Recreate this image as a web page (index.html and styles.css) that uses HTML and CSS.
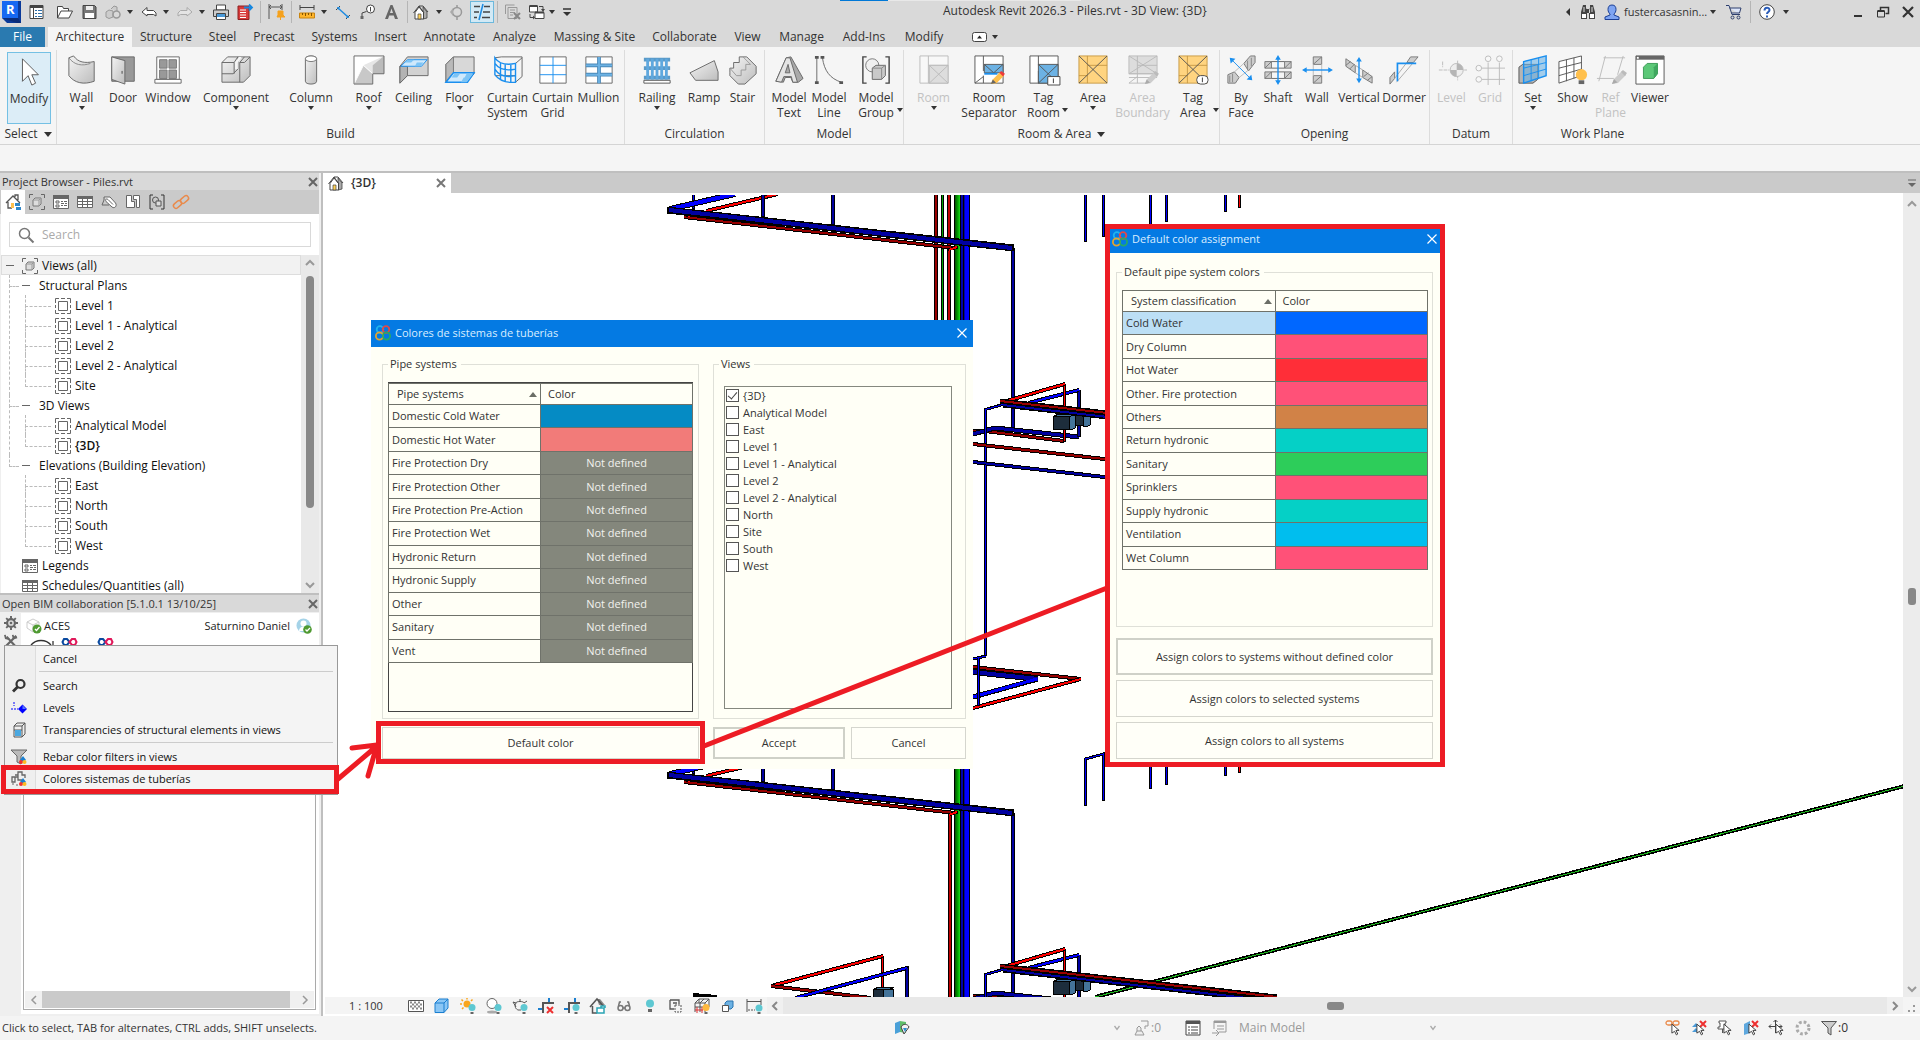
FILE: index.html
```html
<!DOCTYPE html>
<html lang="en">
<head>
<meta charset="utf-8">
<title>Autodesk Revit 2026.3 - Piles.rvt - 3D View: {3D}</title>
<link rel="stylesheet" href="styles.css">
</head>
<body>
<svg class="defs" aria-hidden="true">
  <defs>
    <linearGradient id="g-grey" x1="0" y1="0" x2="1" y2="1"><stop offset="0" stop-color="#f4f4f4"/><stop offset="1" stop-color="#bdbdbd"/></linearGradient>
    <linearGradient id="g-green" x1="0" y1="0" x2="1" y2="0"><stop offset="0" stop-color="#064d06"/><stop offset=".6" stop-color="#0a0"/><stop offset="1" stop-color="#1ed81e"/></linearGradient>
    <symbol id="i-down" viewBox="0 0 6 4"><path d="M0 0h6L3 4z" fill="#333"/></symbol>
    <symbol id="i-up" viewBox="0 0 8 5"><path d="M0 5h8L4 0z" fill="#6b6e66"/></symbol>
    <symbol id="i-x" viewBox="0 0 10 10"><path d="M1 1l8 8M9 1L1 9" fill="none" stroke="currentColor" stroke-width="2"/></symbol>
    <symbol id="i-sheet" viewBox="0 0 16 16"><path d="M3.500 3.500h9v9h-9z" fill="#fff" stroke="#666"/><path d="M.500 5V.500H4M6 .500h4M12 .500h3.500V5M15.500 7v3M15.500 12v3.500H12M10 15.500H6M4 15.500H.500V12M.500 10V7" fill="none" stroke="#666"/></symbol>
    <symbol id="i-viewcube" viewBox="0 0 16 16"><path d="M.500 4V.500H4M12 .500h3.500V4M15.500 12v3.500H12M4 15.500H.500V12" fill="none" stroke="#666"/><path d="M4 6l2-2h6v6l-2 2H4z" fill="#ddd" stroke="#777"/><path d="M4 6h6v6M10 6l2-2" fill="none" stroke="#999"/></symbol>
    <symbol id="i-legend" viewBox="0 0 16 16"><path d="M.500 1.500h15v13H.500z" fill="#fff" stroke="#666"/><path d="M0 1h16v4H0z" fill="#666"/><path d="M3 7h3v2H3zM3 11h3v2H3z" fill="none" stroke="#666"/><path d="M8 7.500h2M11 7.500h3M8 9.500h3M12 9.500h2M8 11.500h2M11 11.500h3" stroke="#666"/></symbol>
    <symbol id="i-grid" viewBox="0 0 16 16"><path d="M.500 2.500h15v11H.500z" fill="#fff" stroke="#666"/><path d="M0 2h16v3H0z" fill="#666"/><path d="M0 7.500h16M0 10.500h16M5.500 5v9M10.500 5v9" stroke="#666"/></symbol>
    <symbol id="i-house" viewBox="0 0 16 16"><path d="M10 3l4 5v6l-4 1z" fill="#aaa" stroke="#444" stroke-width=".8"/><path d="M2 8.500l4-5.500 4.500 5.500V15H2z" fill="#fff" stroke="#444"/><path d="M.500 9L6 2l5 7M6 2h4l5 6" fill="none" stroke="#444"/><path d="M5 10h3v5H5z" fill="#ffd257" stroke="#444" stroke-width=".7"/></symbol>
    <symbol id="i-rings" viewBox="0 0 16 16"><g fill="none" stroke-width="1.800"><circle cx="5" cy="4.500" r="3.300" stroke="#1fb3ec"/><circle cx="11" cy="4.500" r="3.300" stroke="#e04848"/><circle cx="4.500" cy="11" r="3.600" stroke="#e0a431"/><circle cx="11.500" cy="11" r="3.600" stroke="#27a967"/></g></symbol>
    <symbol id="i-cursor" viewBox="0 0 10 14"><path d="M1 1v10l3-2 2 4 1.500-1-2-4H9z" fill="#fff" stroke="#333"/></symbol>
    <symbol id="i-pencil" viewBox="0 0 16 16"><path d="M1 15l2-5 8-8 4 4-8 8z" fill="#ffc04d"/><path d="M1 15l2-5 3.500 3.500z" fill="#666"/><path d="M10 3l2-2 4 3-2 3z" fill="#ef3b3b"/></symbol>
    <symbol id="i-pencil-off" viewBox="0 0 16 16"><path d="M1 15l2-5 8-8 4 4-8 8z" fill="#ccc"/><path d="M1 15l2-5 3.500 3.500z" fill="#aaa"/><path d="M10 3l2-2 4 3-2 3z" fill="#bbb"/></symbol>
    <symbol id="i-infinity" viewBox="0 0 17 10"><g fill="none" stroke-width="2"><path d="M8.500 5L6 2H3L1.500 5 3 8h3z" stroke="#0a4aa0"/><path d="M8.500 5L11 2h3l1.500 3L14 8h-3z" stroke="#e0185a"/></g></symbol>
    <g id="cluster">
      <path class="o w4" d="M973 431h12l79 10"/><path class="dr w2" d="M973 431h12l79 10"/>
      <path class="o w5" d="M973 434l22-6 84 9"/><path class="db w3" d="M973 434l22-6 84 9"/>
      <path class="o w4" d="M1079 390v47"/><path class="db w2" d="M1079 390v46"/>
      <path class="o w4" d="M1028 403l51-13"/><path class="b w2" d="M1028 403l51-13"/>
      <path d="M1075.500 415.500h8v10h-8z" fill="#1d2d3c" stroke="#000"/><path d="M1083.500 415.500h7v9l-3 2h-4z" fill="#44749a" stroke="#000"/>
      <path class="o w3" d="M1064.500 384v58"/><path class="r w1" d="M1064.500 384v57"/>
      <path class="o w4" d="M1003 402l62-18"/><path class="r w2" d="M1003 402l62-18"/>
      <path d="M1053.500 416.500h16v13h-16z" fill="#1d2d3c" stroke="#000"/><path d="M1069.500 416.500l2-2h4v13l-3 2h-3z" fill="#44749a" stroke="#000"/><path d="M1053.500 416.500l4-2h18l-6 2z" fill="#44749a" stroke="#000"/>
      <path class="o w5" d="M1003 405l262 30"/><path class="db w2" d="M1003 405l262 30"/>
      <path class="o w5" d="M1000 401l277 31"/><path class="dr w2" d="M1000 401l277 31"/>
      <path class="o w3" d="M1003 404.500l-17.500 5v246"/><path class="b w1" d="M1003 404.500l-17.500 5v246"/>
    </g>
    <g id="riser">
      <path class="o w3" d="M693.500 195v14"/><path class="b w1" d="M693.500 195v13"/>
      <path class="o w6" d="M670 209l65-15"/><path class="b w4" d="M670 209l65-15"/>
      <path class="o w4" d="M706 211l72-17"/><path class="r w2" d="M706 211l72-17"/>
      <path class="o w4" d="M763 195v22M833 195v30"/><path class="db w2" d="M763 195v21M833 195v29"/>
      <path class="o w4" d="M684 217l271 31"/><path class="dr w2" d="M684 217l271 31"/>
      <path class="o w3" d="M686 216l13-3M948 250l10-3"/><path class="r w2" d="M688 216l11-3M949 250l8-3"/>
      <path class="o w7" d="M667 210l347 38"/><path class="db w4" d="M669 210l343 38"/>
    </g>
  </defs>
</svg>

<header class="titlebar">
  <div class="loading"></div>
  <div class="qat">
    <svg class="logo" viewBox="0 0 20 22"><path d="M0 0h19v22H5l-5-5z" fill="#0a3a9a"/><path d="M0 0h16v17H0z" fill="#1668f2"/><path d="M16 17l3 5h-4l-15-5z" fill="#0a2c78"/><text x="4" y="13" font-size="13" font-weight="700" fill="#fff">R</text></svg>
    <svg viewBox="0 0 16 16"><path d="M1 1.500h13v13H1z" fill="#fff" stroke="#444"/><path d="M1 1h13v3H1z" fill="#444"/><path d="M4.500 4v10" stroke="#444"/><path d="M6 6.500h2M9 6.500h4M6 9.500h2M9 9.500h4M6 12.500h2M9 12.500h4" stroke="#2b6da8"/></svg>
    <svg viewBox="0 0 16 16"><path d="M.500 14V2.500h5l1 2h5V7M.500 14L4 7h11.500L12 14z" fill="#fff" stroke="#444"/></svg>
    <svg viewBox="0 0 16 16"><path d="M1 1.500h11.500L14 3v11.500H1z" fill="#777" stroke="#444"/><path d="M4 2h7v4H4z" fill="#eee"/><path d="M3 9h9v5H3z" fill="#fff"/></svg>
    <svg viewBox="0 0 16 16"><path d="M1 8l3-2 4 1v6l-4 1.500L1 13zM6 5l3-3 3 1v4" fill="#ccc" stroke="#999"/><circle cx="11.500" cy="10.500" r="3.500" fill="none" stroke="#999" stroke-width="1.500"/></svg>
    <svg class="caret"><use href="#i-down"/></svg>
    <svg viewBox="0 0 16 16"><path d="M1 8l5-4.500V6.500h6.500L15 9v3l-2.500-1.500H6V12z" fill="#fff" stroke="#444"/></svg>
    <svg class="caret"><use href="#i-down"/></svg>
    <svg viewBox="0 0 16 16"><path d="M15 8l-5-4.500V6.500H3.500L1 9v3l2.500-1.500H10V12z" fill="#e4e4e4" stroke="#aaa"/></svg>
    <svg class="caret"><use href="#i-down"/></svg>
    <svg viewBox="0 0 16 16"><path d="M3.500 1h9v5h-9z" fill="#fff" stroke="#444"/><path d="M.500 6h15v6.500H.500z" fill="#ccc" stroke="#444"/><path d="M3.500 9.500h9v6h-9z" fill="#fff" stroke="#444"/><path d="M4 10h8v3H4z" fill="#4a9ad8"/></svg>
    <svg viewBox="0 0 16 16"><path d="M1 2h11v13.500H1z" fill="#d83a3a" stroke="#8e2020"/><path d="M3 6h6M3 8.500h6M3 11h6M3 13.500h6" stroke="#fff"/><path d="M7 3.500h8M12 .500l3 3-3 3" fill="none" stroke="#1688e0" stroke-width="1.800"/></svg>
    <span class="bar"></span>
    <svg viewBox="0 0 16 16"><path d="M1 0v15M14 0v6M1 3h13M3 1L1 3l2 2M12 1l2 2-2 2" fill="none" stroke="#555"/><path d="M10 7h5v4l2 2H9l1-2zM12.500 13v3" fill="#f5a11c" stroke="#f5a11c"/></svg>
    <span class="bar"></span>
    <svg viewBox="0 0 16 16"><path d="M1 1v5M15 1v5M1 3.500h14" stroke="#444"/><path d="M.500 9h15v5H.500z" fill="#ffb52b" stroke="#c98511"/><path d="M3.500 9v2M6.500 9v3M9.500 9v2M12.500 9v3" stroke="#855500"/></svg>
    <svg class="caret"><use href="#i-down"/></svg>
    <svg viewBox="0 0 16 16"><path d="M3 4l10 9" stroke="#1f8be0" stroke-width="1.500"/><path d="M1 6l4-4M11 15l4-4" stroke="#444"/><path d="M2 3l3 0-2 3zM14 14l-3 0 2-3z" fill="#1f8be0"/></svg>
    <svg viewBox="0 0 16 16"><circle cx="10.500" cy="5" r="4" fill="#fff" stroke="#444"/><path d="M10.500 3v4.500M6.500 7.500L2 9v4" fill="none" stroke="#444"/><path d="M.500 12h3v3h-3z" fill="#666"/></svg>
    <svg viewBox="0 0 16 16"><path d="M1 15L6.500 1h2L14 15h-3l-1.200-3.500H5.200L4 15zM6 9h3L7.500 4.500z" fill="#666"/></svg>
    <span class="bar"></span>
    <svg viewBox="0 0 16 16"><use href="#i-house"/></svg>
    <svg class="caret"><use href="#i-down"/></svg>
    <svg viewBox="0 0 16 16"><path d="M8 1v2M8 13v3" stroke="#999" stroke-width="1.500"/><circle cx="8" cy="8" r="4.500" fill="none" stroke="#999" stroke-width="1.500"/><path d="M4 4l-3 4 3 4" fill="#aaa"/></svg>
    <button class="thin" aria-label="Thin lines"><svg viewBox="0 0 16 16"><path d="M0 2.500h6M0 8h5M0 13.500h3M10 2.500h6M9 8h7M8 13.500h8" stroke="#444" stroke-width="1.500"/><path d="M9 0L5 16" stroke="#1f8be0" stroke-width="1.500"/></svg></button>
    <span class="bar"></span>
    <svg viewBox="0 0 16 16"><path d="M.500 10V1h9M3 3.500h9v11H3z" fill="none" stroke="#999"/><path d="M5 6h5M5 8.500h5M5 11h3" stroke="#999"/><path d="M9 9l6 6M15 9l-6 6" stroke="#888" stroke-width="2"/></svg>
    <svg viewBox="0 0 16 16"><path d="M.500 2h8v6h-8zM6 8.500h9v6H6z" fill="#fff" stroke="#444"/><path d="M.500 2h8M6 8.500h9" stroke="#444" stroke-width="2"/><path d="M10 2.500h4V6M1 10v3.500h4" fill="none" stroke="#444"/><path d="M12 5h4l-2 3zM4 11.500v4l2-2z" fill="#444"/></svg>
    <svg class="caret"><use href="#i-down"/></svg>
    <svg class="more" viewBox="0 0 8 8"><path d="M0 1h8" stroke="#333" stroke-width="1.500"/><path d="M0 4h8L4 8z" fill="#333"/></svg>
  </div>
  <h1 class="title">Autodesk Revit 2026.3 - Piles.rvt - 3D View: {3D}</h1>
  <div class="account">
    <svg class="w4h8" viewBox="0 0 4 8"><path d="M4 0v8L0 4z" fill="#333"/></svg>
    <svg viewBox="0 0 16 16"><path d="M3 1h3v3l1 2v9H1V8zM13 1h-3v3L9 6v9h6V8zM6 5h4v4H6z" fill="#444"/><path d="M2 10h4v4H2zM10 10h4v4h-4z" fill="#fff"/><path d="M4 3v5M12 3v5" stroke="#ddd"/></svg>
    <svg viewBox="0 0 16 16"><path d="M8 1c3 0 4 2 4 4.500 0 2-1 3.500-2 4.500v1l5 2v2.500H1V13l5-2v-1C5 9 4 7.500 4 5.500 4 3 5 1 8 1z" fill="#7ea4f2" stroke="#1c3f94"/></svg>
    <button class="user">fustercasasnin...<svg class="caret"><use href="#i-down"/></svg></button>
    <svg viewBox="0 0 16 16"><path d="M0 1.500h3l3 9h8M3.500 4H15l-1.500 5H5.500" fill="#dde6fb" stroke="#2e3f6c"/><circle cx="6.500" cy="13.500" r="1.500" fill="none" stroke="#2e3f6c"/><circle cx="12.500" cy="13.500" r="1.500" fill="none" stroke="#2e3f6c"/></svg>
    <span class="bar"></span>
    <svg viewBox="0 0 16 16"><circle cx="8" cy="8" r="7.300" fill="#fff" stroke="#444"/><path d="M5.500 6.500C5.500 3 10.500 3 10.500 6c0 2-2.500 2-2.500 4M8 11.500v2" fill="none" stroke="#2a5cb8" stroke-width="2"/></svg>
    <svg class="caret"><use href="#i-down"/></svg>
    <span class="grow"></span>
    <button class="win" aria-label="Minimize"><svg viewBox="0 0 12 12"><path d="M2 10h8" stroke="#333" stroke-width="2"/></svg></button>
    <button class="win" aria-label="Restore"><svg viewBox="0 0 12 12"><path d="M.500 5h7v6h-7z" fill="none" stroke="#333"/><path d="M.500 5h7" stroke="#333" stroke-width="2"/><path d="M3.500 4V1.500h8v6h-3" fill="none" stroke="#333" stroke-width="1.500"/></svg></button>
    <button class="win" aria-label="Close"><svg viewBox="0 0 12 12"><path d="M1 1l10 10M11 1L1 11" stroke="#333" stroke-width="2.200"/></svg></button>
  </div>
</header>

<nav class="tabs">
  <button class="file">File</button>
  <button class="active">Architecture</button>
  <button>Structure</button><button>Steel</button><button>Precast</button><button>Systems</button><button>Insert</button><button>Annotate</button><button>Analyze</button><button>Massing &amp; Site</button><button>Collaborate</button><button>View</button><button>Manage</button><button>Add-Ins</button><button>Modify</button>
  <button class="mini" aria-label="Minimize ribbon"><svg class="w15h10" viewBox="0 0 15 10"><rect x=".5" y=".5" width="14" height="9" rx="2" fill="#fff" stroke="#444"/><path d="M5 6.500h5L7.500 3.500z" fill="#222"/></svg><svg class="caret"><use href="#i-down"/></svg></button>
</nav>

<section class="ribbon">
  <div class="panel p-select">
    <div class="tools">
      <button class="tool on"><svg viewBox="0 0 32 32"><path d="M9 3v24l6-6 4 10 4-2-4-9h7z" fill="#fff" stroke="#555"/></svg><span>Modify</span></button>
    </div>
    <h2>Select <svg class="tri" viewBox="0 0 8 5"><path d="M0 0h8L4 5z" fill="#333"/></svg></h2>
  </div>
  <div class="panel p-build">
    <div class="tools">
      <button class="tool"><svg viewBox="0 0 32 32"><path d="M2 3l5-2c5 7 12 8 22 6v21c-11 4-21 2-27-6z" fill="url(#g-grey)" stroke="#666"/><path d="M2 3c6 8 14 9 23 6" fill="none" stroke="#888"/></svg><span>Wall</span><svg class="caret"><use href="#i-down"/></svg></button>
      <button class="tool"><svg viewBox="0 0 32 32"><path d="M4 2h24v26H4z" fill="#999" stroke="#666"/><path d="M4 2l14 4v25L4 26z" fill="url(#g-grey)" stroke="#666"/><path d="M15 17v3" stroke="#444"/></svg><span>Door</span></button>
      <button class="tool"><svg viewBox="0 0 32 32"><path d="M4 2h24v24H4z" fill="#fff" stroke="#666"/><path d="M7 5h8v9H7zM17 5h8v9h-8zM7 16h8v9H7zM17 16h8v9h-8z" fill="#999" stroke="#777"/><path d="M2 26h28v4H2z" fill="#fff" stroke="#666"/></svg><span>Window</span></button>
      <button class="tool"><svg viewBox="0 0 32 32"><path d="M1 8l6-6h24v20l-7 7H1z" fill="url(#g-grey)" stroke="#666"/><path d="M1 20h12l5-5V2M14 8v12M1 8h13l4-6M20 29V8l5-6M20 8h5l6-6" fill="none" stroke="#666"/><path d="M15 8l4-6h3l-4 6v7h-3z" fill="#f5f5f5"/></svg><span>Component</span><svg class="caret"><use href="#i-down"/></svg></button>
      <button class="tool"><svg viewBox="0 0 32 32"><path d="M10 4v24c0 4 12 4 12 0V4c0-4-12-4-12 0z" fill="url(#g-grey)" stroke="#666"/><ellipse cx="16" cy="4" rx="6" ry="3" fill="#fff" stroke="#777"/></svg><span>Column</span><svg class="caret"><use href="#i-down"/></svg></button>
      <button class="tool"><svg viewBox="0 0 32 32"><path d="M0 1h32v19H20v11H0z" fill="#fff"/><path d="M0 31L10 11l10 9v11z" fill="#c8c8c8"/><path d="M32 1L10 11l10 9h12z" fill="#e6e6e6"/><path d="M32 1L20 11v9h12z" fill="#bbb"/><path d="M0 31L10 11l10 9M0 1l10 10" fill="none" stroke="#fff"/><path d="M0 1h32v19H20v11H0z" fill="none" stroke="#666"/></svg><span>Roof</span><svg class="caret"><use href="#i-down"/></svg></button>
      <button class="tool"><svg viewBox="0 0 32 32"><path d="M1 12l8-10h22v20H9l-8 8z" fill="#d2d2d2" stroke="#666"/><path d="M1 12h8v10l-8 8z" fill="#b3b3b3" stroke="#666"/><path d="M2 12l7-7h21l-6 7z" fill="#cfe9fc" stroke="#1a8fef"/><path d="M9 5h7l-3 3H6zM19 8h7l-3 4h-6z" fill="#7dc4f5"/></svg><span>Ceiling</span></button>
      <button class="tool"><svg viewBox="0 0 32 32"><path d="M1 10l8-8h22v18l-8 9H1z" fill="#d8d8d8" stroke="#666"/><path d="M1 10l8-8v17l-8 9z" fill="#b9b9b9" stroke="#777"/><path d="M1 29l8-10h22l-7 10z" fill="#cfe9fc" stroke="#1a8fef" stroke-width="1.500"/><path d="M10 20h6l-3 4H7zM20 24h7l-4 5h-6zM23 20h7l-3 4h-6z" fill="#7dc4f5"/></svg><span>Floor</span><svg class="caret"><use href="#i-down"/></svg></button>
      <button class="tool"><svg viewBox="0 0 32 32"><path d="M2 3l7-1h22v21l-7 6M31 3l-7 6v20M2 22h22" fill="none" stroke="#666"/><path d="M2 3c5 7 13 8 22 6v20C14 30 7 28 2 21zM2 9c5 7 13 8 22 6M2 15c5 8 13 9 22 7M8 8v19M13 10v19M19 10v19" fill="none" stroke="#1a8fef" stroke-width="1.500"/></svg><span>Curtain<br>System</span></button>
      <button class="tool"><svg viewBox="0 0 32 32"><path d="M2 2h28v28H2z" fill="#fff" stroke="#666"/><path d="M16 2v28M2 11h28M2 21h28" stroke="#1a8fef"/></svg><span>Curtain<br>Grid</span></button>
      <button class="tool"><svg viewBox="0 0 32 32"><path d="M2 2h28v28H2z" fill="#fff" stroke="#666"/><path d="M16 2v28M2 11h28M2 21h28" stroke="#4a88b8" stroke-width="4"/><path d="M16 2v28M2 11h28M2 21h28" stroke="#6cb2e4" stroke-width="2"/></svg><span>Mullion</span></button>
    </div>
    <h2>Build</h2>
  </div>
  <div class="panel p-circ">
    <div class="tools">
      <button class="tool"><svg viewBox="0 0 32 32"><path d="M2 5h28M2 14h28M2 24h28" stroke="#5a9ac8" stroke-width="4"/><path d="M6 4v22M11 4v22M16 4v22M21 4v22M26 4v22" stroke="#5fa8de" stroke-width="3"/><path d="M2 27h28v3H2z" fill="#fff" stroke="#555"/></svg><span>Railing</span><svg class="caret"><use href="#i-down"/></svg></button>
      <button class="tool"><svg viewBox="0 0 32 32"><path d="M1 19L27 6l4 12v9H7z" fill="url(#g-grey)" stroke="#666"/></svg><span>Ramp</span></button>
      <button class="tool"><svg viewBox="0 0 32 32"><path d="M2 19v-5h4v-6h6V2h8l10 10v8L18 31h-7L2 22z" fill="url(#g-grey)" stroke="#666"/><path d="M2 14l7 8h5v-6h5v-6h5l-8-8" fill="none" stroke="#999"/></svg><span>Stair</span></button>
    </div>
    <h2>Circulation</h2>
  </div>
  <div class="panel p-model">
    <div class="tools">
      <button class="tool"><svg viewBox="0 0 32 32"><path d="M2 28L13 3l5-1 13 23-5 4h-6l-2-5h-6l-2 5z" fill="#a9a9a9" stroke="#666"/><path d="M2 28L13 3h4l8 26h-5l-1.500-6h-8L8 29zM12 19h5l-2-9z" fill="#e4e4e4" stroke="#666"/></svg><span>Model<br>Text</span></button>
      <button class="tool"><svg viewBox="0 0 32 32"><path d="M3 3v26M9 3c2 14 8 22 20 26" fill="none" stroke="#666"/><path d="M1 1h4v3H1zM1 28h4v3H1zM7 1h4v3H7zM27 28h4v3h-4z" fill="#555"/></svg><span>Model<br>Line</span></button>
      <button class="tool split"><svg viewBox="0 0 32 32"><path d="M6 2H2v28h4M26 2h4v28h-4" fill="none" stroke="#444" stroke-width="1.500"/><circle cx="12" cy="11" r="7" fill="#f0f0f0" stroke="#777"/><path d="M12 14l4-3h10v11l-4 4H12z" fill="#c9c9c9" stroke="#666"/><path d="M12 14h10v12M22 14l4-3" fill="none" stroke="#888"/></svg><span>Model<br>Group</span><svg class="caret"><use href="#i-down"/></svg></button>
    </div>
    <h2>Model</h2>
  </div>
  <div class="panel p-room">
    <div class="tools">
      <button class="tool" disabled><svg viewBox="0 0 32 32"><path d="M1 1h30v29H1zM10 1v29M10 11h21" fill="#f8f8f8" stroke="#bbb"/><path d="M11 11h20v19H11z" fill="#ddd" stroke="#bbb"/><path d="M11 11l20 19M31 11L11 30" stroke="#bbb"/></svg><span>Room</span><svg class="caret"><use href="#i-down"/></svg></button>
      <button class="tool"><svg viewBox="0 0 32 32"><path d="M1 1h30v29H1z" fill="#fff" stroke="#555"/><path d="M10 1v16M10 22v8M1 30l9-7" fill="none" stroke="#555"/><path d="M11 10h20v9H11z" fill="#6cb2e4" stroke="#555"/><path d="M11 10l10 9 10-9" fill="none" stroke="#555"/><path d="M11 20h14" stroke="#1a8fef" stroke-width="2"/><use href="#i-pencil" x="17" y="16" width="16" height="16"/></svg><span>Room<br>Separator</span></button>
      <button class="tool split"><svg viewBox="0 0 32 32"><path d="M1 1h30v29H1zM10 1v10M10 17v13" fill="#fff" stroke="#555"/><path d="M10 10h21v20H10z" fill="#6cb2e4" stroke="#555"/><path d="M10 10l21 20M31 10L10 30" stroke="#555"/><path d="M20 23h13v9H20z" fill="#fff" stroke="#444"/><path d="M26 25v5" stroke="#333"/></svg><span>Tag<br>Room</span><svg class="caret"><use href="#i-down"/></svg></button>
      <button class="tool"><svg viewBox="0 0 32 32"><path d="M1 1h30v29H1z" fill="#ffd480" stroke="#c79a45"/><path d="M10 1v29M10 11h21M1 22h9" stroke="#c79a45"/><path d="M1 1l30 29M31 1L1 30" stroke="#555"/></svg><span>Area</span><svg class="caret"><use href="#i-down"/></svg></button>
      <button class="tool" disabled><svg viewBox="0 0 32 32"><path d="M1 1h30v19H1z" fill="#ddd" stroke="#bbb"/><path d="M1 1l30 19M31 1L1 20M10 1v29M10 11h21M1 20h30M1 24h30M1 30h20M1 30l9-7" fill="none" stroke="#bbb"/><use href="#i-pencil-off" x="17" y="16" width="16" height="16"/></svg><span>Area<br>Boundary</span></button>
      <button class="tool split"><svg viewBox="0 0 32 32"><path d="M1 1h30v29H1z" fill="#ffd480" stroke="#c79a45"/><path d="M10 1v29M10 11h21M1 22h9" stroke="#c79a45"/><path d="M1 1l30 29M31 1L1 30" stroke="#555"/><rect x="20" y="22" width="12" height="9" rx="4" fill="#fff" stroke="#444"/><path d="M26 24v5" stroke="#333"/></svg><span>Tag<br>Area</span><svg class="caret"><use href="#i-down"/></svg></button>
    </div>
    <h2>Room &amp; Area <svg class="tri" viewBox="0 0 8 5"><path d="M0 0h8L4 5z" fill="#333"/></svg></h2>
  </div>
  <div class="panel p-open">
    <div class="tools">
      <button class="tool"><svg viewBox="0 0 32 32"><path d="M2 21v9h8l4-6-5-6zM19 9l7-8h5v7l-7 9z" fill="#ccc" stroke="#777"/><path d="M4 22v7M7 20v9M23 6v9M27 3v9" stroke="#888"/><path d="M9 18l10-9M14 24l10-8" stroke="#bbb"/><path d="M6 5l20 20" stroke="#1a8fef"/><path d="M4 3l6 1-5 5zM28 27l-6-1 5-5z" fill="#1a8fef"/></svg><span>By<br>Face</span></button>
      <button class="tool"><svg viewBox="0 0 32 32"><path d="M2 7h7v7H2zM23 7h7v7h-7zM2 18h7v7H2zM23 18h7v7h-7z" fill="#ccc" stroke="#777"/><path d="M2 14l7-7M23 14l7-7M2 25l7-7M23 25l7-7" stroke="#777"/><path d="M9 7h14M9 14h14M9 18h14M9 25h14" stroke="#666"/><path d="M16 3v26" stroke="#1a8fef" stroke-width="1.500"/><path d="M13 5h6l-3-5zM13 27h6l-3 5z" fill="#1a8fef"/></svg><span>Shaft</span></button>
      <button class="tool"><svg viewBox="0 0 32 32"><path d="M12 2h9v8h-9zM12 22h9v8h-9z" fill="#ccc" stroke="#777"/><path d="M12 10l9-8M12 30l9-8" stroke="#777"/><path d="M12 10v12M21 10v12" stroke="#bbb"/><path d="M4 16h25" stroke="#1a8fef" stroke-width="1.500"/><path d="M5 13v6l-5-3zM28 13v6l5-3z" fill="#1a8fef"/></svg><span>Wall</span></button>
      <button class="tool"><svg viewBox="0 0 32 32"><path d="M2 4l10 7v8L2 12zM20 16l10 7v7l-10-6z" fill="#ccc" stroke="#777"/><path d="M2 11l5-4M6 15l5-5M21 23l5-4M25 27l5-4" stroke="#777"/><path d="M12 11l8 5M12 19l8 5" stroke="#aaa"/><path d="M16 6v20" stroke="#1a8fef" stroke-width="1.500"/><path d="M13 7h6l-3-5zM13 25h6l-3 5z" fill="#1a8fef"/></svg><span>Vertical</span></button>
      <button class="tool"><svg viewBox="0 0 32 32"><path d="M23 2h8l-5 6h-7zM1 24l5-6v7l-5 6z" fill="#ccc" stroke="#777"/><path d="M19 8L6 25M26 8L8 29" stroke="#aaa"/><path d="M9 28V9h20" fill="none" stroke="#1a8fef" stroke-width="1.800"/></svg><span>Dormer</span></button>
    </div>
    <h2>Opening</h2>
  </div>
  <div class="panel p-datum">
    <div class="tools">
      <button class="tool" disabled><svg viewBox="0 0 32 32"><path d="M2 16h11M29 16h3M6 7v6M22 6v21" stroke="#bbb" stroke-dasharray="4 1"/><circle cx="21" cy="16" r="7" fill="#eee" stroke="#bbb"/><path d="M21 9a7 7 0 0 1 7 7h-7zM21 23a7 7 0 0 1-7-7h7z" fill="#b5b5b5"/></svg><span>Level</span></button>
      <button class="tool" disabled><svg viewBox="0 0 32 32"><path d="M14 8v24M26 8v24M7 14h25M7 26h25" stroke="#bbb"/><g fill="#f8f8f8" stroke="#bbb"><circle cx="14" cy="4" r="3"/><circle cx="26" cy="4" r="3"/><circle cx="4" cy="14" r="3"/><circle cx="4" cy="26" r="3"/></g></svg><span>Grid</span></button>
    </div>
    <h2>Datum</h2>
  </div>
  <div class="panel p-plane">
    <div class="tools">
      <button class="tool"><svg viewBox="0 0 32 32"><path d="M1 13l4-3h16v16l-5 4H1z" fill="#b5b5b5" stroke="#555"/><path d="M6 7l24-6v21L6 30z" fill="#6cb2e4" fill-opacity=".6" stroke="#1a8fef" stroke-width="1.500"/><path d="M14 5v23M22 3v22M6 14l24-6M6 22l24-7" stroke="#1a8fef"/></svg><span>Set</span><svg class="caret"><use href="#i-down"/></svg></button>
      <button class="tool"><svg viewBox="0 0 32 32"><path d="M1 7l24-6v21L1 30zM9 5v23M17 3v22M1 14l24-6M1 22l24-7" fill="#fff" stroke="#555"/><circle cx="25" cy="21" r="6" fill="#ffc04d"/><path d="M22 27h6v4h-6z" fill="#666"/></svg><span>Show</span></button>
      <button class="tool" disabled><svg viewBox="0 0 32 32"><path d="M8 3h23M1 25h18M10 1L3 28M29 1l-6 20" fill="none" stroke="#bbb"/><use href="#i-pencil-off" x="16" y="15" width="17" height="17"/></svg><span>Ref<br>Plane</span></button>
      <button class="tool"><svg viewBox="0 0 32 32"><path d="M1 1h30v30H1z" fill="#fff" stroke="#555"/><path d="M1 1h30v4H1z" fill="#666"/><path d="M2 2h2v2H2z" fill="#fff"/><path d="M9 13l4-4h11v11l-4 5H9z" fill="#5cc878" stroke="#3b9955"/><path d="M20 13l4-4v11l-4 5z" fill="#3fa75f"/></svg><span>Viewer</span></button>
    </div>
    <h2>Work Plane</h2>
  </div>
</section>
<div class="options"></div>

<main class="work">
  <aside class="dock">
    <section class="browser">
      <h2 class="dockhead">Project Browser - Piles.rvt <button aria-label="Close"><svg><use href="#i-x"/></svg></button></h2>
      <div class="icontabs">
        <button class="active" aria-label="All"><svg viewBox="0 0 16 16"><path d="M1 9l7-7 7 7M3 8v6h4M10 3V1h3v5" fill="none" stroke="#555" stroke-width="1.300"/><path d="M6 9h3v5H6z" fill="#ffc04d"/><path d="M10 9h5v3h-5zM11 13h5v3h-5z" fill="#2f86c8"/></svg></button>
        <button aria-label="Views"><svg><use href="#i-viewcube"/></svg></button>
        <button aria-label="Legends"><svg><use href="#i-legend"/></svg></button>
        <button aria-label="Schedules"><svg><use href="#i-grid"/></svg></button>
        <button aria-label="Sheets"><svg viewBox="0 0 16 16"><path d="M3 3h6l5.500 6c2 3-1 6-3.500 4L5 7.500C4 6 5 4 7 5.500l5 5" fill="#fff" stroke="#666"/><path d="M3 3v3l-2 5h7" fill="none" stroke="#666"/></svg></button>
        <button aria-label="Families"><svg viewBox="0 0 16 16"><path d="M1.500 1.500h5v6h3v6h-8zM8.500 1.500h6v12h-3v-8h-3z" fill="#fff" stroke="#666"/></svg></button>
        <button aria-label="Groups"><svg viewBox="0 0 16 16"><path d="M4 1H1v14h3M12 1h3v14h-3" fill="none" stroke="#333"/><circle cx="6.500" cy="6" r="3" fill="none" stroke="#555"/><path d="M7 7h5v5H7z" fill="#ddd" stroke="#555"/></svg></button>
        <button aria-label="Links"><svg viewBox="0 0 16 16"><g fill="none" stroke="#e98a4b" stroke-width="1.500"><rect x="0" y="8" width="9" height="5" rx="2.500" transform="rotate(-40 4.500 10.500)"/><rect x="7" y="3" width="9" height="5" rx="2.500" transform="rotate(-40 11.500 5.500)"/></g></svg></button>
      </div>
      <div class="searchwrap"><label class="search"><svg viewBox="0 0 16 16"><circle cx="6.500" cy="6.500" r="5" fill="none" stroke="#777" stroke-width="1.500"/><path d="M10.500 10.500l5 5" stroke="#777" stroke-width="2"/></svg><input type="text" placeholder="Search" aria-label="Search"></label></div>
      <div class="treebox">
        <ul class="tree">
          <li class="root sel"><i class="minus"></i><svg><use href="#i-viewcube"/></svg>Views (all)</li>
          <li class="group"><div class="row"><i class="minus"></i>Structural Plans</div>
            <ul><li><svg><use href="#i-sheet"/></svg>Level 1</li><li><svg><use href="#i-sheet"/></svg>Level 1 - Analytical</li><li><svg><use href="#i-sheet"/></svg>Level 2</li><li><svg><use href="#i-sheet"/></svg>Level 2 - Analytical</li><li><svg><use href="#i-sheet"/></svg>Site</li></ul></li>
          <li class="group"><div class="row"><i class="minus"></i>3D Views</div>
            <ul><li><svg><use href="#i-sheet"/></svg>Analytical Model</li><li><svg><use href="#i-sheet"/></svg><b>{3D}</b></li></ul></li>
          <li class="group end"><div class="row"><i class="minus"></i>Elevations (Building Elevation)</div>
            <ul><li><svg><use href="#i-sheet"/></svg>East</li><li><svg><use href="#i-sheet"/></svg>North</li><li><svg><use href="#i-sheet"/></svg>South</li><li><svg><use href="#i-sheet"/></svg>West</li></ul></li>
          <li class="root flat"><svg><use href="#i-legend"/></svg>Legends</li>
          <li class="root flat"><svg><use href="#i-grid"/></svg>Schedules/Quantities (all)</li>
        </ul>
        <div class="vscroll"><svg viewBox="0 0 10 6"><path d="M1 5l4-4 4 4" fill="none" stroke="#999" stroke-width="2"/></svg><span class="thumb"></span><svg viewBox="0 0 10 6"><path d="M1 1l4 4 4-4" fill="none" stroke="#999" stroke-width="2"/></svg></div>
      </div>
    </section>
    <section class="bim">
      <h2 class="dockhead">Open BIM collaboration [5.1.0.1 13/10/25] <button aria-label="Close"><svg><use href="#i-x"/></svg></button></h2>
      <div class="bimbody">
        <div class="rail">
          <svg viewBox="0 0 16 16"><circle cx="8" cy="8" r="4.500" fill="#ddd" stroke="#666" stroke-width="2.500"/><circle cx="8" cy="8" r="1.500" fill="#666"/><path d="M8 0v3M8 13v3M0 8h3M13 8h3M2.500 2.500l2 2M11.500 11.500l2 2M13.500 2.500l-2 2M2.500 13.500l2-2" stroke="#666" stroke-width="2.200"/></svg>
          <svg viewBox="0 0 16 16"><path d="M2 14L14 2M3 3l10 11" stroke="#666" stroke-width="2.500"/><path d="M1 1l1 4 4 1M15 4l-4 1-1-4" fill="none" stroke="#666" stroke-width="2"/></svg>
        </div>
        <div class="bimmain">
          <div class="who"><svg viewBox="0 0 16 16"><path d="M1 4l6-3 6 3v6l-6 4-6-4zM1 4l6 3 6-3M7 7v7" fill="#fff" stroke="#ccc"/><circle cx="11" cy="11" r="4.500" fill="#4f9a32"/><path d="M9 11l1.500 1.500L13.500 9" fill="none" stroke="#fff" stroke-width="1.300"/></svg>ACES<span class="grow"></span>Saturnino Daniel<svg class="avatar" viewBox="0 0 16 16"><circle cx="7.500" cy="7.500" r="7" fill="#a5d3e8"/><circle cx="7.500" cy="5.500" r="3" fill="#fff"/><path d="M3 13c0-6 9-6 9 0z" fill="#fff"/><circle cx="11.500" cy="11.500" r="4.300" fill="#4f9a32"/><path d="M9.500 11.500l1.500 1.500 3-3" fill="none" stroke="#fff" stroke-width="1.300"/></svg></div>
          <div class="bimicons"><svg class="w24" viewBox="0 0 24 10"><path d="M1 8C6 2 16 2 21 8M23 4v5h-5" fill="none" stroke="#333" stroke-width="1.300"/></svg><svg><use href="#i-infinity"/></svg><svg><use href="#i-infinity"/></svg></div>
          <div class="bimlist">
            <div class="hscroll"><svg viewBox="0 0 6 10"><path d="M5 1L1 5l4 4" fill="none" stroke="#999" stroke-width="1.500"/></svg><span class="thumb"></span><svg viewBox="0 0 6 10"><path d="M1 1l4 4-4 4" fill="none" stroke="#999" stroke-width="1.500"/></svg></div>
          </div>
        </div>
      </div>
    </section>
  </aside>

  <section class="view">
    <div class="viewtabs">
      <div class="viewtab"><svg><use href="#i-house"/></svg><b>{3D}</b><span class="grow"></span><button aria-label="Close view"><svg><use href="#i-x"/></svg></button></div>
      <span class="grow"></span>
      <svg class="tabmenu" viewBox="0 0 8 8"><path d="M0 1h8" stroke="#666"/><path d="M0 4h8L4 8z" fill="#666"/></svg>
    </div>
    <div class="viewbody">
      <div class="canvas">
        <svg class="scene" aria-label="3D piping model">
          <g transform="translate(-325 -195)">
            <path class="o w4" d="M936 195v130"/><path class="dr w2" d="M936 195v130"/>
            <path class="o w3" d="M942.500 195v130"/><path class="gr w1" d="M942.500 195v130"/>
            <path class="o w4" d="M949 195v130"/><path class="r2 w2" d="M949 195v130"/>
            <path class="o w4" d="M950 815v182"/><path class="r2 w2" d="M950 815v182"/>
            <path d="M954 195h7v802h-7z" fill="#000"/><path d="M955 195h5v802h-5z" fill="url(#g-green)"/>
            <path d="M960 195h10v802h-10z" fill="#000"/><path d="M961 195h2v802h-2z" fill="#0000a8"/><path d="M965 195h4v802h-4z" fill="#00f"/><path d="M964 195h1v802h-1z" fill="#0000a0"/>
            <path class="o w4" d="M1013 248v182"/><path class="db w2" d="M1013 248v181"/>
            <path class="o w4" d="M1013 813v190"/><path class="db w2" d="M1013 813v190"/>
            <use href="#riser"/><use href="#riser" y="565"/>
            <path class="o w3" d="M1085.500 195v47M1103.500 195v42M1150.500 195v40M1166.500 195v27M1225.500 195v17M1239.500 195v13"/>
            <path class="b w1" d="M1085.500 195v46M1103.500 195v41M1150.500 195v40M1166.500 195v26M1225.500 195v16"/><path class="r w1" d="M1239.500 195v12"/>
            <path class="o w3" d="M1085.500 806v-47l18-5v47M1150.500 760v29M1166.500 760v25M1225.500 760v16M1239.500 760v13"/>
            <path class="b w1" d="M1085.500 805v-46l18-5v46M1150.500 760v28M1166.500 760v24M1225.500 760v15"/><path class="r w1" d="M1239.500 760v12"/>
            <path class="o w4" d="M1095 997l825-215"/><path class="g3 w1" d="M1095 997l825-215"/>
            <use href="#cluster"/><use href="#cluster" y="565"/>
            <path class="o w4" d="M973 444l140 16"/><path class="dr w2" d="M973 444l140 16"/>
            <path class="o w4" d="M973 462l140 16"/><path class="db w2" d="M973 462l140 16"/>
            <path class="o w4" d="M973 667l108 12"/><path class="dr w2" d="M973 667l108 12"/>
            <path class="o w4" d="M973 708l108-29"/><path class="r w2" d="M973 708l108-29"/>
            <path class="o w6" d="M973 672l65 7"/><path class="o w5" d="M1038 679l-65 18"/><path class="db w4" d="M973 672l65 7"/><path class="b w3" d="M1037 679l-64 18"/>
            <path class="o w3" d="M973 659l13-3M978.500 658v48"/><path class="b w1" d="M973 659l13-3M978.500 658v47"/>
            <path class="o w3" d="M882.500 956v34"/><path class="r w1" d="M882.500 956v34"/>
            <path class="o w4" d="M771 986l112-30"/><path class="r w2" d="M771 986l112-30"/>
            <path class="o w4" d="M771 986l100 12"/><path class="dr w2" d="M771 986l100 12"/>
            <path class="o w4" d="M795 998l112-30v32"/><path class="b w2" d="M795 998l112-30"/><path class="db w2" d="M907 968v32"/>
            <path d="M873.500 989.500h10v10h-10z" fill="#1d2d3c" stroke="#000"/><path d="M883.500 989.500h10v10h-10zM873.500 989.500l4-2h16l-4 2z" fill="#44749a" stroke="#000"/>
            <path class="o w4" d="M693 995l24 2"/>
          </g>
        </svg>
      </div>
      <div class="cscroll"><svg viewBox="0 0 10 6"><path d="M1 5l4-4 4 4" fill="none" stroke="#999" stroke-width="2"/></svg><span class="thumb"></span><svg viewBox="0 0 10 6"><path d="M1 1l4 4 4-4" fill="none" stroke="#999" stroke-width="2"/></svg></div>
    </div>
    <div class="viewbar">
      <div class="viewctl">
        <span class="scale">1 : 100</span>
        <svg viewBox="0 0 16 16"><path d="M.500 2.500h15v11H.500z" fill="#fff" stroke="#555"/><path d="M2 4.500h12M2 8.500h12" stroke="#888" stroke-width="2" stroke-dasharray="2 2"/><path d="M4 6.500h11M4 10.500h11" stroke="#888" stroke-width="2" stroke-dasharray="2 2"/></svg>
        <svg viewBox="0 0 16 16"><path d="M1 5l4-4h9v9l-4 4.500H1z" fill="#8ac6f5" stroke="#1a7fd0"/><path d="M1 5h9v9.500M10 5l4-4" fill="none" stroke="#1a7fd0"/></svg>
        <svg viewBox="0 0 16 16"><circle cx="7" cy="6" r="3.500" fill="#f9a61c"/><path d="M7 0v1.500M0 6h2M1.500 1.500l1.500 1.500M12.500 1.500L11 3M2 11l1.500-1.500" stroke="#f9a61c" stroke-width="1.500"/><circle cx="12" cy="9.500" r="3.500" fill="#5ec8d2"/><path d="M10.500 14h3v2h-3z" fill="#666"/></svg>
        <svg viewBox="0 0 16 16"><circle cx="6" cy="5.500" r="5" fill="#fff" stroke="#666"/><ellipse cx="6" cy="14" rx="5" ry="1.500" fill="#aaa"/><circle cx="12" cy="9.500" r="3.500" fill="#5ec8d2"/><path d="M10.500 14h3v2h-3z" fill="#666"/></svg>
        <svg viewBox="0 0 16 16"><path d="M1 4l3 1c0-2 8-2 8 0l3-2M4 5c-2 4 0 6 2 7h3M8 1v2M1 4l3 5" fill="none" stroke="#555"/><circle cx="12" cy="9.500" r="3.500" fill="#5ec8d2"/><path d="M10.500 14h3v2h-3z" fill="#666"/></svg>
        <svg viewBox="0 0 16 16"><path d="M5 15V5h11" fill="none" stroke="#555" stroke-width="2"/><path d="M11 0v4M0 11h4" stroke="#1a7fd0" stroke-width="2"/><path d="M9 9l6 6M15 9l-6 6" stroke="#ee3030" stroke-width="2"/></svg>
        <svg viewBox="0 0 16 16"><path d="M5 15V5h11" fill="none" stroke="#555" stroke-width="2"/><path d="M11 0v4M0 11h4" stroke="#1a7fd0" stroke-width="2"/><circle cx="12" cy="9.500" r="3.500" fill="#5ec8d2"/><path d="M10.500 14h3v2h-3z" fill="#666"/></svg>
        <svg viewBox="0 0 16 16"><path d="M7 1h3l5 6H9z" fill="#888"/><path d="M0 9l7-8 7 8M2.500 8v7H7" fill="none" stroke="#555" stroke-width="1.500"/><path d="M7 10h7v5H7zM11 10V8h4v2" fill="#fff" stroke="#2ba5b5" stroke-width="1.500"/></svg>
        <svg viewBox="0 0 16 16"><g fill="none" stroke="#777" stroke-width="1.500"><circle cx="4.500" cy="10" r="2.500"/><circle cx="11.500" cy="10" r="2.500"/><path d="M7 10h2M2.500 8l1-4H5M13.500 8l-1-4H11"/></g></svg>
        <svg viewBox="0 0 16 16"><circle cx="8" cy="5.500" r="4" fill="#5ec8d2"/><path d="M6 11h4v3H6z" fill="#666"/></svg>
        <svg viewBox="0 0 16 16"><path d="M2 2h9v4M2 2v9h4M5 5h4" fill="none" stroke="#555" stroke-width="1.300"/><path d="M7 7h6v7H7z" fill="none" stroke="#555" stroke-dasharray="2 1"/></svg>
        <svg viewBox="0 0 16 16"><path d="M1 5l4-4h10v8M1 5h10v9M1 5v9M6 5v9M1 9h10M5 1v4M11 5l4-4M10 1L6 5" fill="none" stroke="#555"/><path d="M3 9v6M8 9v6M1 12h8" stroke="#d33"/><circle cx="12" cy="9.500" r="3.500" fill="#ffb93e"/><path d="M10.500 14h3v2h-3z" fill="#666"/></svg>
        <svg viewBox="0 0 16 16"><path d="M5 5l2-2h6v6l-2 2H5z" fill="#6cb2e4" stroke="#2a75b0"/><path d="M2.500 7.500h6v6h-6z" fill="#fff" stroke="#555"/></svg>
        <svg viewBox="0 0 16 16"><path d="M1 1v13M15 1v6M1 3.500h14" stroke="#555"/><path d="M2 12h7" stroke="#555" stroke-dasharray="2 1"/><circle cx="13" cy="10" r="3.500" fill="#5ec8d2"/><path d="M11.500 14h3v2h-3z" fill="#666"/></svg>
      </div>
      <div class="htrack"><svg viewBox="0 0 6 10"><path d="M5 1L1 5l4 4" fill="none" stroke="#888" stroke-width="2"/></svg><span class="rail2"><span class="thumb"></span></span><svg viewBox="0 0 6 10"><path d="M1 1l4 4-4 4" fill="none" stroke="#888" stroke-width="2"/></svg></div>
      <svg class="grip" viewBox="0 0 8 8"><path d="M5 0h2v2H5zM5 5h2v2H5zM0 5h2v2H0z" fill="#999"/></svg>
    </div>
  </section>
</main>

<footer class="status">
  <span class="hint">Click to select, TAB for alternates, CTRL adds, SHIFT unselects.</span>
  <svg class="s-center" viewBox="0 0 16 16"><path d="M1 3l5-2v11l-5 2z" fill="#4aa0d8"/><path d="M6 1l6 1v11l-6-1z" fill="#5fbf6a"/><path d="M7 7c2-4 7-3 8 0l-5 7z" fill="#f3f3f3" stroke="#444"/><path d="M9 8h4l-2 4z" fill="#2b8fd0"/></svg>
  <svg class="s-v" viewBox="0 0 6 6"><path d="M.500 1L3 4.500 5.500 1" fill="none" stroke="#aaa" stroke-width="1.300"/></svg>
  <span class="s-ws off"><svg viewBox="0 0 16 16"><path d="M7 1h7v5h-3v3" fill="none" stroke="#999"/><path d="M1 15l2-4h5l2 4zM3 11V8l2-2 2 2v3" fill="#eee" stroke="#999"/></svg>:0</span>
  <svg class="s-list" viewBox="0 0 16 16"><path d="M1 1h14v14H1z" fill="#fff" stroke="#444"/><path d="M1 1h14v3H1z" fill="#555"/><path d="M3 7h2M6 7h7M3 10h2M6 10h7M3 13h2M6 13h7" stroke="#444"/></svg>
  <span class="s-model off"><svg viewBox="0 0 16 16"><path d="M3 1h12v11H8M3 1v8" fill="none" stroke="#999"/><path d="M3 1h12v2H3z" fill="#999"/><path d="M6 6h7M6 9h7M1 13h6M5 10l3 3-3 3" fill="none" stroke="#999"/></svg>Main Model</span>
  <svg class="s-v2" viewBox="0 0 6 6"><path d="M.500 1L3 4.500 5.500 1" fill="none" stroke="#aaa" stroke-width="1.300"/></svg>
  <div class="s-sel">
    <svg viewBox="0 0 16 16"><rect x="1" y="1" width="6" height="4" rx="2" fill="none" stroke="#e98a4b" stroke-width="1.300"/><rect x="8" y="1" width="6" height="4" rx="2" fill="none" stroke="#e98a4b" stroke-width="1.300"/><use href="#i-cursor" x="6" y="3" width="9" height="13"/></svg>
    <svg viewBox="0 0 16 16"><path d="M1 7l4-4 3 4zM1 12l4-4 3 4z" fill="#4a9ad8"/><path d="M9 1l6 6M15 1L9 7" stroke="#ee3030" stroke-width="2"/><use href="#i-cursor" x="5" y="3" width="9" height="13"/></svg>
    <svg viewBox="0 0 16 16"><path d="M2 1h7v2H8v4h2v2H1V7h2V3H2zM5.500 9v4" fill="#fff" stroke="#555"/><use href="#i-cursor" x="6" y="3" width="9" height="13"/></svg>
    <svg viewBox="0 0 16 16"><path d="M1 4l6-3v12l-6 2z" fill="#5fa8de"/><path d="M9 1l6 6M15 1L9 7" stroke="#ee3030" stroke-width="2"/><use href="#i-cursor" x="5" y="3" width="9" height="13"/></svg>
    <svg viewBox="0 0 16 16"><path d="M6.500 0v13M0 6.500h13M4.500 2l2-2 2 2M2 4.500l-2 2 2 2M11 4.500l2 2-2 2" fill="none" stroke="#444"/><use href="#i-cursor" x="6" y="3" width="9" height="13"/></svg>
    <svg viewBox="0 0 16 16"><circle cx="8" cy="8" r="6" fill="none" stroke="#aaa" stroke-width="3" stroke-dasharray="2.700 2"/></svg>
    <span class="filter"><svg viewBox="0 0 16 16"><path d="M.500 1.500h15L10 8v7l-3-2V8z" fill="#ccc" stroke="#555"/></svg>:0</span>
  </div>
</footer>

<div class="menu" role="menu">
  <button>Cancel</button>
  <hr>
  <button><svg viewBox="0 0 16 16"><circle cx="9.500" cy="6" r="4" fill="none" stroke="#333" stroke-width="2.200"/><path d="M6.500 9L2 13.500" stroke="#333" stroke-width="2.800"/></svg>Search</button>
  <button><svg viewBox="0 0 16 16"><path d="M0 9h7M3 2v4" stroke="#00f" stroke-dasharray="2 1"/><path d="M11.500 4.500L16 9l-4.500 4.500L7 9z" fill="#00f"/><path d="M11.500 5v4H15z" fill="#57f"/></svg>Levels</button>
  <button><svg viewBox="0 0 16 16"><path d="M3 4l3-3h8v11l-3 3H3z" fill="#eee" stroke="#555"/><path d="M3 4h8v11M11 4l3-3M3 8h8" fill="none" stroke="#555"/><path d="M4 8h6v6H4z" fill="#4aa8e0"/></svg>Transparencies of structural elements in views</button>
  <hr>
  <button><svg viewBox="0 0 16 16"><path d="M0 1h16l-6 6v8l-4-2V7z" fill="#bbb" stroke="#666"/><path d="M12 7l3 4-3 2-3-2z" fill="#1b7fd0"/><circle cx="10" cy="13" r="2" fill="#e33"/><circle cx="13.500" cy="13" r="2" fill="#fb2"/></svg>Rebar color filters in views</button>
  <button class="hot"><svg viewBox="0 0 16 16"><path d="M4 4h3V1h4v3h3v3M1 6h3v5H1zM4 6h3M7 4v5h4" fill="none" stroke="#666" stroke-width="1.300"/><path d="M1 13h2M5 14h2" stroke="#666"/><path d="M12 7l3 4-3 2-3-2z" fill="#1b7fd0"/><circle cx="10" cy="13" r="2" fill="#e33"/><circle cx="13.500" cy="13" r="2" fill="#fb2"/></svg>Colores sistemas de tuberías</button>
</div>

<div class="dialog d1" role="dialog" aria-label="Colores de sistemas de tuberías">
  <div class="dtitle"><svg><use href="#i-rings"/></svg>Colores de sistemas de tuberías<button aria-label="Close"><svg viewBox="0 0 10 10"><path d="M.500.500l9 9M9.500.500l-9 9" stroke="#fff" stroke-width="1.200"/></svg></button></div>
  <div class="dbody">
    <fieldset>
      <legend>Pipe systems</legend>
      <div class="tablebox">
        <table>
          <thead><tr><th>Pipe systems <svg class="sort"><use href="#i-up"/></svg></th><th>Color</th></tr></thead>
          <tbody>
            <tr><td>Domestic Cold Water</td><td class="c-cold"></td></tr>
            <tr><td>Domestic Hot Water</td><td class="c-hot"></td></tr>
            <tr><td>Fire Protection Dry</td><td class="c-none">Not defined</td></tr>
            <tr><td>Fire Protection Other</td><td class="c-none">Not defined</td></tr>
            <tr><td>Fire Protection Pre-Action</td><td class="c-none">Not defined</td></tr>
            <tr><td>Fire Protection Wet</td><td class="c-none">Not defined</td></tr>
            <tr><td>Hydronic Return</td><td class="c-none">Not defined</td></tr>
            <tr><td>Hydronic Supply</td><td class="c-none">Not defined</td></tr>
            <tr><td>Other</td><td class="c-none">Not defined</td></tr>
            <tr><td>Sanitary</td><td class="c-none">Not defined</td></tr>
            <tr><td>Vent</td><td class="c-none">Not defined</td></tr>
          </tbody>
        </table>
      </div>
    </fieldset>
    <fieldset>
      <legend>Views</legend>
      <div class="checks">
        <label><input type="checkbox" checked>{3D}</label>
        <label><input type="checkbox">Analytical Model</label>
        <label><input type="checkbox">East</label>
        <label><input type="checkbox">Level 1</label>
        <label><input type="checkbox">Level 1 - Analytical</label>
        <label><input type="checkbox">Level 2</label>
        <label><input type="checkbox">Level 2 - Analytical</label>
        <label><input type="checkbox">North</label>
        <label><input type="checkbox">Site</label>
        <label><input type="checkbox">South</label>
        <label><input type="checkbox">West</label>
      </div>
    </fieldset>
    <button class="btn">Default color</button>
    <div class="pair"><button class="btn strong">Accept</button><button class="btn">Cancel</button></div>
  </div>
</div>

<div class="dialog d2" role="dialog" aria-label="Default color assignment">
  <div class="dtitle"><svg><use href="#i-rings"/></svg>Default color assignment<button aria-label="Close"><svg viewBox="0 0 10 10"><path d="M.500.500l9 9M9.500.500l-9 9" stroke="#fff" stroke-width="1.200"/></svg></button></div>
  <div class="dbody">
    <fieldset>
      <legend>Default pipe system colors</legend>
      <table>
        <thead><tr><th>System classification <svg class="sort"><use href="#i-up"/></svg></th><th>Color</th></tr></thead>
        <tbody>
          <tr><td class="sel">Cold Water</td><td class="c-blue"></td></tr>
          <tr><td>Dry Column</td><td class="c-pink"></td></tr>
          <tr><td>Hot Water</td><td class="c-red"></td></tr>
          <tr><td>Other. Fire protection</td><td class="c-pink"></td></tr>
          <tr><td>Others</td><td class="c-brown"></td></tr>
          <tr><td>Return hydronic</td><td class="c-teal"></td></tr>
          <tr><td>Sanitary</td><td class="c-green"></td></tr>
          <tr><td>Sprinklers</td><td class="c-pink"></td></tr>
          <tr><td>Supply hydronic</td><td class="c-teal"></td></tr>
          <tr><td>Ventilation</td><td class="c-sky"></td></tr>
          <tr><td>Wet Column</td><td class="c-pink"></td></tr>
        </tbody>
      </table>
    </fieldset>
    <button class="btn strong">Assign colors to systems without defined color</button>
    <button class="btn">Assign colors to selected systems</button>
    <button class="btn">Assign colors to all systems</button>
  </div>
</div>

<svg class="notes" aria-hidden="true">
  <g fill="none" stroke="#ed1c24" stroke-width="5">
    <rect x="3.500" y="767.500" width="333" height="24"/>
    <rect x="378.500" y="723.500" width="324" height="38"/>
    <rect x="1107.500" y="226.500" width="335" height="538"/>
    <path d="M338 779l39-33M368 776l9-31-25 3" stroke-linecap="round" stroke-linejoin="round"/>
    <path d="M704 746l403-158"/>
  </g>
</svg>
</body>
</html>
```
FILE: styles.css
```css
* { box-sizing: border-box; }
html, body { height: 100%; }
body {
  margin: 0;
  display: flex;
  flex-direction: column;
  position: relative;
  overflow: hidden;
  font: 12px/16px "Open Sans", "Noto Sans", sans-serif;
  color: #333;
  background: #f5f5f5;
}
h1, h2 { margin: 0; font-size: 12px; font-weight: 400; }
button { font: inherit; color: inherit; background: none; border: 0; padding: 0; margin: 0; }
ul { list-style: none; margin: 0; padding: 0; }
svg { width: 16px; height: 16px; flex: none; display: block; overflow: visible; }
.defs { position: absolute; width: 0; height: 0; }
.grow { flex: 1; }
svg.caret { width: 6px; height: 4px; }
.bar { width: 1px; height: 22px; background: #b5b5b5; }

/* title bar */
.titlebar { position: relative; display: grid; grid-template-columns: 943px 252px 1fr; align-items: center; height: 27px; background: #d9d9d9; padding-bottom: 3px; }
.loading { position: absolute; left: 840px; top: 0; width: 241px; height: 1px; background: linear-gradient(90deg, #0078d7 48px, #e8e8e8 48px); }
.qat { display: grid; align-items: center; padding-left: 2px; grid-template-columns: 27px 28px 25px 23px 22px 14px 22px 14px 22px 14px 24px 23px 8px 23px 8px 22px 14px 25px 24px 23px 6px 23px 13px 21px 27px 8px 24px 20px 14px 16px; }
.qat .logo { width: 20px; height: 22px; }
.qat .more { width: 8px; height: 8px; }
.thin { width: 24px; height: 22px; display: grid; place-items: center; background: #d2e9f5; border: 1px solid #6cb8dc; }
.title { padding-bottom: 3px; white-space: nowrap; }
.account { display: flex; align-items: center; gap: 8px; padding-left: 371px; padding-right: 6px; font-size: 11px; }
.account .w4h8 { width: 4px; height: 8px; margin-right: 2px; }
.user { display: flex; align-items: center; gap: 3px; width: 94px; margin-left: -4px; white-space: nowrap; }
.win { margin-left: 5px; }
.win svg { width: 12px; height: 12px; }

/* ribbon tabs */
.tabs { display: grid; height: 20px; background: #d9d9d9; grid-template-columns: 45px 87px 68px 45px 58px 63px 49px 69px 61px 99px 81px 45px 63px 62px 58px 60px; }
.tabs button { white-space: nowrap; padding-bottom: 1px; }
.tabs .file { background: #2a7ab0; color: #fff; }
.tabs .active { background: #f5f5f5; margin-left: 3px; }
.tabs .mini { display: flex; align-items: center; justify-content: flex-end; gap: 5px; padding-right: 15px; }
.w15h10 { width: 15px; height: 10px; }

/* ribbon */
.ribbon { display: flex; height: 98px; padding-top: 3px; border-bottom: 1px solid #d4d4d4; background: #f5f5f5; }
.panel { display: flex; flex-direction: column; border-right: 1px solid #dcdcdc; }
.panel:last-child { border-right: 0; }
.tools { display: grid; height: 76px; }
.p-select .tools { grid-template-columns: 44px; padding: 2px 5px 0 7px; }
.p-build .tools { grid-template-columns: 39px 44px 46px 90px 60px 55px 35px 57px 39px 51px 41px; padding: 0 5px; }
.p-circ .tools { grid-template-columns: 50px 44px 33px; padding: 0 5px 0 7px; }
.p-model .tools { grid-template-columns: 40px 40px 54px; padding-left: 4px; }
.p-room .tools { grid-template-columns: 51px 60px 49px 50px 49px 52px; padding-left: 4px; }
.p-open .tools { grid-template-columns: 36px 38px 40px 44px 46px; padding: 0 2px 0 3px; }
.p-datum .tools { grid-template-columns: 37px 40px; padding: 0 2px 0 3px; }
.p-plane .tools { grid-template-columns: 38px 41px 35px 44px; padding-left: 1px; }
.tool { position: relative; height: 74px; padding: 4px 0 0; line-height: 15px; text-align: center; white-space: nowrap; display: flex; flex-direction: column; align-items: center; }
.tool > svg:first-child { width: 30px; height: 32px; margin-bottom: 4px; }
.tool.on { height: 72px; padding-top: 2px; background: #dcedf7; border: 1px solid #74c0e4; }
.tool .caret { margin-top: 1px; }
.tool.split .caret { position: absolute; right: 0; bottom: 12px; }
.tool:disabled { color: #c2c2c2; }
.panel h2 { display: flex; justify-content: center; align-items: center; gap: 6px; height: 16px; }
.tri { width: 8px; height: 5px; }
.options { height: 28px; border-bottom: 2px solid #bfbfbf; }

/* docked panels */
.work { flex: 1; min-height: 0; display: flex; background: #fff; }
.dock { width: 323px; flex: none; display: flex; flex-direction: column; background: #efefef; border-right: 2px solid #bfbfbf; padding-right: 2px; }
.dockhead { display: flex; justify-content: space-between; align-items: center; height: 17px; padding: 0 1px 0 2px; background: #d9d9d9; white-space: nowrap; font-size: 11px; }
.dockhead button { color: #666; }
.dockhead svg { width: 10px; height: 10px; }
.browser { height: 420px; display: flex; flex-direction: column; }
.icontabs { display: flex; height: 24px; padding-left: 1px; background: #cacaca; }
.icontabs button { width: 24px; display: grid; place-items: center; }
.icontabs .active { background: #fff; }
.searchwrap { height: 41px; padding: 8px 8px 0; background: #fff; margin-left: 1px; }
.search { display: flex; align-items: center; gap: 8px; height: 25px; padding-left: 8px; border: 1px solid #d9d9d9; }
.search input { border: 0; outline: 0; flex: 1; padding: 1px 0 0; font: inherit; background: none; }
.search input::placeholder { color: #aaa; }
.treebox { flex: 1; min-height: 0; display: flex; margin-left: 1px; background: #fff; color: #111; }
.tree { flex: 1; overflow: hidden; }
.tree li { position: relative; }
.tree li li, .row, .root { display: flex; align-items: center; height: 20px; padding-top: 1px; white-space: nowrap; }
.minus { width: 8px; height: 1px; margin-right: 9px; background: #666; }
.root { padding-left: 5px; gap: 4px; }
.root .minus { margin-right: 4px; }
.root.flat { padding-left: 21px; }
.sel.root { background: #f2f2f2; border: 1px solid #ddd; padding-left: 4px; }
.row { padding-left: 21px; }
.tree li li { padding-left: 54px; gap: 4px; }
.tree li li::before { content: ""; position: absolute; left: 24px; top: 0; width: 25px; height: 11px; border: dashed #bbb; border-width: 0 0 1px 1px; }
.tree li li:not(:last-child)::after { content: ""; position: absolute; left: 24px; top: 10px; height: 10px; border-left: 1px dashed #bbb; }
.group::before { content: ""; position: absolute; left: 8px; top: 0; width: 9px; height: 11px; border: dashed #bbb; border-width: 0 0 1px 1px; }
.group:not(.end)::after { content: ""; position: absolute; left: 8px; top: 10px; bottom: 0; border-left: 1px dashed #bbb; }
.vscroll { width: 18px; display: flex; flex-direction: column; align-items: center; justify-content: space-between; padding: 5px 0; background: #e9e9e9; }
.vscroll svg, .cscroll svg { width: 10px; height: 6px; }
.vscroll .thumb { width: 8px; height: 232px; margin-bottom: 64px; border-radius: 4px; background: #888; }
.bim { flex: 1; min-height: 0; display: flex; flex-direction: column; border-top: 2px solid #bfbfbf; }
.bimbody { flex: 1; display: flex; padding-top: 1px; }
.rail { width: 21px; display: flex; flex-direction: column; align-items: center; gap: 4px; padding: 3px 0 0 1px; }
.rail svg { width: 14px; height: 14px; }
.bimmain { flex: 1; display: flex; flex-direction: column; background: #fff; padding: 4px 2px 4px; margin-bottom: 2px; }
.who { display: flex; align-items: center; gap: 2px; height: 18px; padding: 0 5px 0 3px; font-size: 11px; color: #222; }
.who .avatar { margin-left: 4px; }
.bimicons { display: flex; gap: 19px; padding-left: 7px; height: 14px; align-items: center; }
.bimicons svg { width: 17px; height: 10px; }
.bimicons svg.w24 { width: 24px; margin-right: -12px; }
.bimlist { flex: 1; display: flex; align-items: flex-end; margin-right: 1px; border: 1px solid #aaa; }
.hscroll { flex: 1; display: flex; align-items: center; height: 17px; margin: 1px; padding: 0 6px; background: #f0f0f0; }
.hscroll svg { width: 6px; height: 10px; }
.hscroll .thumb { flex: 1; height: 17px; margin: 0 12px 0 5px; background: #cacaca; }

/* 3D view */
.view { flex: 1; min-width: 0; display: flex; flex-direction: column; }
.viewtabs { display: flex; align-items: center; height: 20px; background: #cacaca; padding-right: 4px; }
.viewtab { display: flex; align-items: center; width: 128px; height: 20px; padding: 0 5px; background: #fff; gap: 7px; }
.viewtab b, .tree b { font-weight: 600; }
.viewtab button { color: #777; }
.viewtab button svg { width: 10px; height: 10px; }
.tabmenu { width: 8px; height: 8px; }
.viewbody { flex: 1; min-height: 0; display: flex; }
.canvas { flex: 1; min-width: 0; margin: 2px 0 0 2px; overflow: hidden; background: #fff; }
.scene { width: 100%; height: 100%; overflow: hidden; shape-rendering: crispEdges; }
.o, .b, .db, .r, .r2, .dr, .gr, .g3 { fill: none; }
.o { stroke: #000; }
.b { stroke: #00f; }
.db { stroke: #0000a0; }
.r { stroke: #f00; }
.r2 { stroke: #c00000; }
.dr { stroke: #980000; }
.gr { stroke: #00a000; }
.g3 { stroke: #20c020; }
.w1 { stroke-width: 1px; }
.w2 { stroke-width: 2px; }
.w3 { stroke-width: 3px; }
.w4 { stroke-width: 4px; }
.w5 { stroke-width: 5px; }
.w6 { stroke-width: 6px; }
.w7 { stroke-width: 7px; }
.cscroll { width: 17px; display: flex; flex-direction: column; align-items: center; justify-content: space-between; padding: 8px 0 5px; background: #ececec; }
.cscroll .thumb { width: 8px; height: 17px; border-radius: 3px; background: #888; }
.viewbar { display: flex; align-items: stretch; height: 17px; margin: 0 0 2px 2px; background: #f4f4f4; }
.viewctl { display: flex; align-items: center; width: 442px; }
.viewctl svg { margin: 0 5px; }
.scale { width: 78px; padding-left: 24px; font-size: 11px; }
.htrack { flex: 1; display: flex; align-items: center; background: #f0f0f0; padding: 0 5px; gap: 5px; }
.htrack svg { width: 6px; height: 10px; }
.rail2 { flex: 1; height: 17px; display: flex; align-items: center; padding-left: 544px; background: #e8e8e8; }
.rail2 .thumb { width: 17px; height: 8px; border-radius: 3px; background: #888; }
.grip { width: 8px; height: 8px; margin: 8px 4px 0 5px; }

/* status bar */
.status { display: grid; align-items: center; height: 24px; padding: 0 0 1px 2px; background: #f4f4f4; white-space: nowrap; font-size: 11px; grid-template-columns: 892px 220px 20px 51px 26px 219px 1fr auto; }
.off { color: #999; }
.s-v, .s-v2 { width: 6px; height: 6px; }
.s-ws, .s-model, .filter { display: flex; align-items: center; gap: 1px; font-size: 12px; }
.s-model { gap: 12px; }
.s-sel { display: flex; gap: 10px; align-items: center; padding-right: 72px; }

/* context menu */
.menu { position: absolute; left: 4px; top: 645px; width: 334px; padding: 2px 2px 4px; border: 1px solid #999; background: linear-gradient(90deg, #efefef 30px, #ddd 30px, #ddd 31px, #f4f4f4 31px); color: #111; font-size: 11px; display: flex; flex-direction: column; }
.menu button { display: flex; align-items: center; height: 22px; padding-left: 4px; gap: 16px; text-align: left; white-space: nowrap; }
.menu button:first-child { padding-left: 36px; }
.menu hr { height: 1px; border: 0; margin: 1px 2px 3px 32px; background: #ccc; }

/* dialogs */
.dialog { position: absolute; background: #fffff6; color: #333; font-size: 11px; }
.dtitle { display: flex; align-items: center; gap: 4px; padding: 0 6px 2px 4px; background: #047ae3; color: #d9edff; }
.dtitle button { margin-left: auto; }
.dtitle button svg { width: 10px; height: 10px; }
.d1 { left: 371px; top: 320px; width: 602px; }
.d1 .dtitle { height: 27px; }
.d1 .dbody { display: grid; grid-template-columns: 317px 253px; gap: 8px 14px; padding: 9px 7px 10px 11px; }
.d2 { left: 1110px; top: 229px; width: 330px; }
.d2 .dtitle { height: 24px; padding: 0 3px 4px 2px; }
.d2 .dbody { display: flex; flex-direction: column; gap: 5px; padding: 11px 7px 3px 6px; }
fieldset { min-width: 0; margin: 0; padding: 10px 5px 6px 5px; border: 1px solid #dfe0d8; height: 363px; }
.d2 fieldset { margin-bottom: 6px; }
legend { margin-left: 0; padding: 0 4px 0 2px; height: 16px; line-height: 16px; }
.tablebox { height: 330px; border: 1px solid #444; }
table { width: 306px; border-collapse: collapse; table-layout: fixed; }
.tablebox table { width: 305px; height: 280px; margin: 0 -1px; }
.d2 table { height: 280px; }
th, td { padding: 0 0 0 3px; border: 1px solid #6f726a; text-align: left; font-weight: 400; line-height: 16px; white-space: nowrap; }
th { position: relative; height: 21px; padding-left: 8px; }
td { height: 23px; }
th + th { padding-left: 7px; }
.sort { position: absolute; right: 3px; top: 8px; width: 8px; height: 5px; }
.c-cold { background: #058bc4; }
.c-hot { background: #f27b79; }
.c-none { background: #84877c; color: #f2f2ee; text-align: center; padding: 0; }
.c-blue { background: #0067ff; }
.c-pink { background: #ff5178; }
.c-red { background: #ff2e38; }
.c-brown { background: #d18247; }
.c-teal { background: #05d0c6; }
.c-green { background: #2dcd5a; }
.c-sky { background: #00beee; }
td.sel { background: #bcdff5; }
.checks { height: 323px; margin: 4px 8px 0 5px; border: 1px solid #85887f; }
.checks label { display: flex; align-items: center; gap: 4px; height: 17px; padding-left: 1px; }
.checks input { appearance: none; width: 13px; height: 13px; margin: 0; border: 1px solid #555; background: #fff; position: relative; }
.checks input:checked::after { content: ""; position: absolute; left: 3px; top: 0; width: 4px; height: 8px; border: solid #444; border-width: 0 1px 1px 0; transform: rotate(40deg); }
.btn { height: 32px; border: 1px solid #d5d6ce; background: #fffff8; text-align: center; }
.btn.strong { border: 2px solid #cfd1c8; }
.pair { display: grid; grid-template-columns: 132px 115px; gap: 6px; }
.d2 .btn { height: 37px; }

/* call-out marks */
.notes { position: absolute; inset: 0; width: 100%; height: 100%; pointer-events: none; }
```
